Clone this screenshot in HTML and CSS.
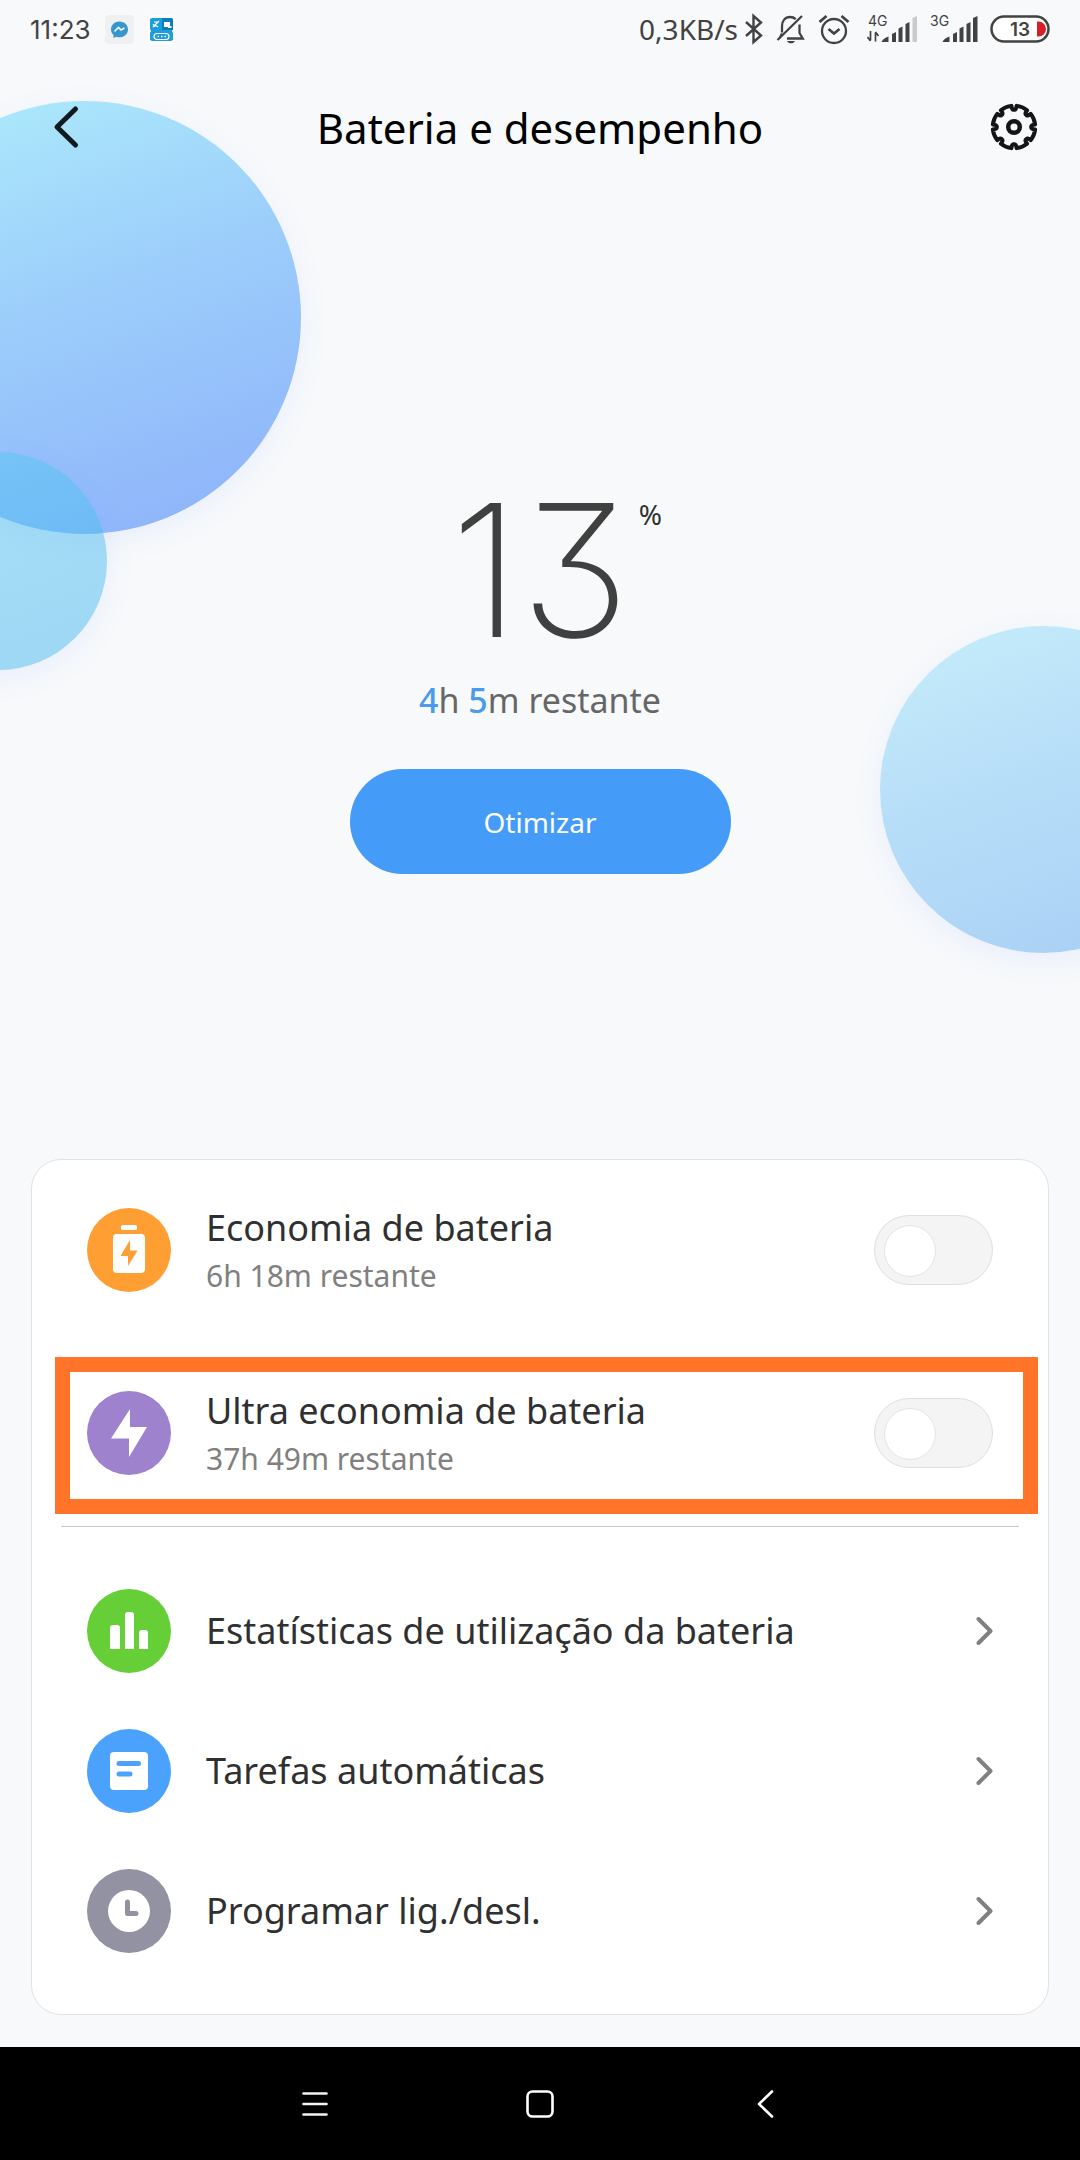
FILE: index.html
```html
<!DOCTYPE html>
<html lang="pt">
<head>
<meta charset="utf-8">
<meta name="viewport" content="width=device-width, initial-scale=1">
<title>Bateria e desempenho</title>
<link rel="stylesheet" href="styles.css">
</head>
<body>
<div class="bubbles" aria-hidden="true">
  <span class="bubble bubble-large"></span>
  <span class="bubble bubble-small"></span>
  <span class="bubble bubble-right"></span>
</div>

<div class="status">
  <div class="status-left">
    <span class="clock">11:23</span>
    <svg class="app-icon" width="29" height="29" viewBox="0 0 29 29" aria-hidden="true">
      <rect width="29" height="29" rx="4" fill="#f0f0f0"/>
      <path d="M14.5 6.500c-4.800 0-8.500 3.500-8.500 8 0 2.200.900 4 2.500 5.400v3.100l3-1.200c1 .400 2 .500 3 .500 4.800 0 8.500-3.400 8.500-7.800s-3.700-8-8.500-8z" fill="#3498cf"/>
      <path d="M9.500 16.500l4-4 2.500 2.500 3.500-2" fill="none" stroke="#fff" stroke-width="1.600"/>
    </svg>
    <svg class="app-icon" width="27" height="29" viewBox="0 0 27 29" aria-hidden="true">
      <rect width="27" height="29" rx="4" fill="#fff"/>
      <path d="M4 3h19l2 1v10l-1 2 1 2v7l-2 1H4l-2-1v-7l1-2-1-2V4z" fill="#1c9ddc"/>
      <path d="M14 3h9l2 1v11H14z" fill="#0f7cba"/>
      <path d="M5 12l6-6M6 7h3M7 10l3 2M5 9l2 3" stroke="#fff" stroke-width="1.200"/>
      <path d="M16 7h6v4h1.500v2H20v-1h-4z" fill="#fff"/>
      <rect x="6" y="18.500" width="15" height="6" rx="3" fill="#1c9ddc" stroke="#fff" stroke-width="1.200"/>
      <path d="M9.500 21.500h1.500M13 21.500h1.500M16.500 21.500h1.500" stroke="#fff" stroke-width="1.300"/>
    </svg>
  </div>
  <div class="status-right">
    <span class="speed">0,3KB/s</span>
    <svg width="20" height="32" viewBox="0 0 20 32" fill="none" stroke="#424242" stroke-width="2.400" aria-hidden="true">
      <path d="M2 9l15 13.500-7.500 6.500V3l7.500 6.500L2 23"/>
    </svg>
    <svg class="gap" width="30" height="32" viewBox="0 0 30 32" fill="none" stroke="#424242" stroke-width="2.300" aria-hidden="true">
      <path d="M6 19.500V13c0-5 3-9 8-9 2.300 0 4.300.800 5.700 2.100M23.500 11.500V20l3.300 5.500H11M1.500 27L26 3M3.500 25.500l2.500-5"/>
      <path d="M11 28h8c-.800 1.700-2.200 2.300-4 2.300S11.800 29.700 11 28z" fill="#424242" stroke="none"/>
    </svg>
    <svg class="gap" width="32" height="32" viewBox="0 0 32 32" fill="none" stroke="#424242" stroke-width="2.300" aria-hidden="true">
      <circle cx="16" cy="18" r="12"/>
      <path d="M10.500 16l5.500 4.500 5.500-4.500" stroke-width="2.600"/>
      <path d="M1.500 9l7-6M30.500 9l-7-6" stroke-width="2.800"/>
    </svg>
    <svg class="gap" width="56" height="32" viewBox="-4 0 56 32" role="img" aria-label="Sinal 4G">
      <text class="net" x="2" y="13">4G</text>
      <path d="M4.500 18v9M1.500 24l3 4M9.500 28.500v-9M12.500 23l-3-4" fill="none" stroke="#424242" stroke-width="1.700"/>
      <path d="M15.500 29c1-2.500 3.500-4.500 7-5.500V29zM26 21l4-2v10h-4zM32.500 15.500l4-2V29h-4zM39.500 11l4-2v20h-4z" fill="#424242"/>
      <path d="M46.500 5l4.500-2v26h-4.500z" fill="#cacaca"/>
    </svg>
    <svg class="gap" width="48" height="32" viewBox="0 0 48 32" role="img" aria-label="Sinal 3G">
      <text class="net" x="0" y="13">3G</text>
      <path d="M12.500 29c1-2.500 3.500-4.500 7-5.500V29zM23 21l4-2v10h-4zM29.500 15.500l4-2V29h-4zM36.500 11l4-2v20h-4zM43 5l4.500-2v26H43z" fill="#424242"/>
    </svg>
    <svg class="gap" width="60" height="32" viewBox="0 0 60 32" role="img" aria-label="Bateria 13%">
      <rect x="1.500" y="3.500" width="57" height="25" rx="12.500" fill="#fff" stroke="#424242" stroke-width="2.500"/>
      <path d="M47 8.500h1.500a7.500 7.500 0 0 1 0 15H47z" fill="#d81f26"/>
      <text class="level" x="20" y="23">13</text>
    </svg>
  </div>
</div>

<header class="bar">
  <button class="icon-button icon-button-start" type="button" aria-label="Voltar">
    <svg width="30" height="48" viewBox="0 0 30 48" fill="none" stroke="#111a1c" stroke-width="5" stroke-linecap="round" stroke-linejoin="round" aria-hidden="true"><path d="M24.500 6L6 24l18.500 18"/></svg>
  </button>
  <h1 class="title">Bateria e desempenho</h1>
  <button class="icon-button icon-button-end" type="button" aria-label="Definições">
    <svg width="48" height="48" viewBox="-24 -24 48 48" fill="none" stroke="#151515" aria-hidden="true">
      <path id="gear" stroke-width="4" stroke-linejoin="round" d=""/>
      <circle r="5.800" stroke-width="4.500"/>
    </svg>
  </button>
</header>

<main>
  <section class="hero">
    <p class="charge"><span class="charge-value">13</span><span class="charge-unit">%</span></p>
    <p class="remaining"><b>4</b>h <b>5</b>m restante</p>
    <button class="optimize" type="button">Otimizar</button>
  </section>

  <section class="card">
    <div class="modes">
      <label class="row">
        <svg class="badge" viewBox="0 0 84 84" aria-hidden="true">
          <circle cx="42" cy="42" r="42" fill="#ff9f33"/>
          <rect x="34" y="17" width="16" height="5" rx="1.500" fill="#fff"/>
          <rect x="26" y="26" width="32" height="39" rx="4" fill="#fff"/>
          <path d="M43 32v10.500h7.500L41 58V48h-7.500z" fill="#ff9f33"/>
        </svg>
        <span class="text"><span class="name">Economia de bateria</span><span class="note">6h 18m restante</span></span>
        <input class="switch" type="checkbox" role="switch">
      </label>
      <label class="row row-marked">
        <svg class="badge" viewBox="0 0 84 84" aria-hidden="true">
          <circle cx="42" cy="42" r="42" fill="#9e82ce"/>
          <path d="M43 18v18h17L42 66V47.500H24z" fill="#fff"/>
        </svg>
        <span class="text"><span class="name">Ultra economia de bateria</span><span class="note">37h 49m restante</span></span>
        <input class="switch" type="checkbox" role="switch">
      </label>
    </div>
    <hr class="divider">
    <nav class="links">
      <a class="row" href="#estatisticas">
        <svg class="badge" viewBox="0 0 84 84" aria-hidden="true">
          <circle cx="42" cy="42" r="42" fill="#66cf38"/>
          <path d="M23 60V39q0-3 3-3h4q3 0 3 3v21zM38 60V26q0-3 3-3h3q3 0 3 3v34zM52 60V44q0-3 3-3h3q3 0 3 3v16z" fill="#fff"/>
        </svg>
        <span class="text"><span class="name">Estatísticas de utilização da bateria</span></span>
        <svg class="chevron" viewBox="0 0 17 30" aria-hidden="true"><path d="M2.500 3L14.500 15l-12 12"/></svg>
      </a>
      <a class="row" href="#tarefas">
        <svg class="badge" viewBox="0 0 84 84" aria-hidden="true">
          <circle cx="42" cy="42" r="42" fill="#4ba2fd"/>
          <rect x="23" y="23" width="38" height="38" rx="4" fill="#fff"/>
          <path d="M32 34.500h19.500M32 45h11" stroke="#4ba2fd" stroke-width="5" stroke-linecap="round"/>
        </svg>
        <span class="text"><span class="name">Tarefas automáticas</span></span>
        <svg class="chevron" viewBox="0 0 17 30" aria-hidden="true"><path d="M2.500 3L14.500 15l-12 12"/></svg>
      </a>
      <a class="row" href="#programar">
        <svg class="badge" viewBox="0 0 84 84" aria-hidden="true">
          <circle cx="42" cy="42" r="42" fill="#9292a3"/>
          <circle cx="42" cy="42" r="21" fill="#fff"/>
          <path d="M40.500 33v11.500H49" fill="none" stroke="#9292a3" stroke-width="5" stroke-linecap="round" stroke-linejoin="round"/>
        </svg>
        <span class="text"><span class="name">Programar lig./desl.</span></span>
        <svg class="chevron" viewBox="0 0 17 30" aria-hidden="true"><path d="M2.500 3L14.500 15l-12 12"/></svg>
      </a>
    </nav>
  </section>
</main>

<footer class="system-nav">
  <button type="button" aria-label="Recentes">
    <svg width="32" height="32" viewBox="0 0 32 32" fill="none" stroke="#f4f4f4" stroke-width="2.600" stroke-linecap="round" aria-hidden="true"><path d="M4.500 5.500h23M4.500 16h23M4.500 26.500h23"/></svg>
  </button>
  <button type="button" aria-label="Início">
    <svg width="32" height="32" viewBox="0 0 32 32" fill="none" stroke="#fff" stroke-width="2.600" aria-hidden="true"><rect x="3.500" y="3.500" width="25" height="25" rx="5"/></svg>
  </button>
  <button type="button" aria-label="Voltar">
    <svg width="32" height="32" viewBox="0 0 32 32" fill="none" stroke="#fff" stroke-width="2.600" stroke-linecap="round" stroke-linejoin="round" aria-hidden="true"><path d="M23 3.500L10 16l13 12.500"/></svg>
  </button>
</footer>
<script src="gear.js"></script>
</body>
</html>
```
FILE: gear.js
```js
// Outline of the settings gear: eight wide teeth parted by small round notches.
const point = (radius, degrees) => {
  const a = degrees * Math.PI / 180;
  return (radius * Math.sin(a)).toFixed(2) + " " + (-radius * Math.cos(a)).toFixed(2);
};
let outline = "";
for (let i = 0; i < 8; i++) {
  const notch = i * 45;
  outline += (i ? "L" : "M") + point(21.300, notch - 7);
  outline += "Q" + point(16.800, notch - 7) + " " + point(17.300, notch);
  outline += "Q" + point(16.800, notch + 7) + " " + point(21.300, notch + 7);
  outline += "A21.300 21.300 0 0 1 " + point(21.300, notch + 38);
}
document.getElementById("gear").setAttribute("d", outline + "Z");
```
FILE: styles.css
```css
* {
  box-sizing: border-box;
}

body {
  position: relative;
  display: flex;
  flex-direction: column;
  min-height: 100vh;
  margin: 0;
  overflow-x: hidden;
  background: #f7f9fb;
  color: #303030;
  font-family: "Noto Sans", "Open Sans", sans-serif;
}

button {
  padding: 0;
  border: 0;
  background: none;
  font-family: inherit;
}

svg {
  display: block;
  flex: none;
}

/* Decorative circles behind the page */
.bubbles {
  position: absolute;
  inset: 0;
  z-index: -1;
  overflow: hidden;
}

.bubble {
  position: absolute;
  border-radius: 50%;
  box-shadow: 0 8px 28px rgba(120, 150, 255, 0.1);
}

.bubble-large {
  top: 101px;
  left: -132px;
  width: 433px;
  height: 433px;
  background: linear-gradient(160deg, #aceafb 5%, #9bcbfb 50%, #8eb3fa 95%);
}

.bubble-small {
  top: 452px;
  left: -111px;
  width: 218px;
  height: 218px;
  background: linear-gradient(160deg, rgba(86, 200, 246, 0.48), rgba(66, 180, 236, 0.5));
}

.bubble-right {
  top: 626px;
  right: -127px;
  width: 327px;
  height: 327px;
  background: linear-gradient(160deg, #c6eefa, #b7def8 45%, #a8cff5);
}

/* Status bar */
.status {
  display: flex;
  align-items: center;
  justify-content: space-between;
  height: 58px;
  padding: 0 30px;
  color: #424242;
}

.status-left,
.status-right {
  display: flex;
  align-items: center;
}

.clock {
  font-family: Inter, sans-serif;
  font-size: 26px;
}

.app-icon {
  margin-left: 14px;
}

.speed {
  margin-right: 6px;
  font-size: 28px;
}

.gap {
  margin-left: 12px;
}

.net,
.level {
  fill: #424242;
  font-family: Inter, sans-serif;
  font-size: 14px;
}

.level {
  font-size: 19px;
  font-weight: 600;
}

/* Title bar */
.bar {
  display: grid;
  grid-template-columns: 1fr auto 1fr;
  align-items: center;
  height: 138px;
  padding: 0 42px;
}

.title {
  margin: 0;
  color: #000;
  font-size: 42px;
  font-weight: 400;
}

.icon-button-start {
  justify-self: start;
  padding-left: 9px;
}

.icon-button-end {
  justify-self: end;
}

/* Battery level */
.hero {
  display: flex;
  flex-direction: column;
  align-items: center;
  padding: 278px 32px 285px;
}

.hero p {
  margin: 0;
}

.charge {
  display: grid;
  grid-template-columns: 1fr auto 1fr;
  color: #404040;
}

.charge-value {
  grid-column: 2;
  font-family: Inter, sans-serif;
  font-size: 184px;
  font-weight: 230;
  font-feature-settings: "cv09";
  line-height: 192px;
}

.charge-unit {
  padding: 20px 0 0 9px;
  color: #303030;
  font-size: 28px;
  line-height: 40px;
}

.remaining {
  color: #666;
  font-size: 34px;
  line-height: 68px;
}

.remaining b {
  color: #4b9bea;
  font-weight: 500;
}

.optimize {
  width: 381px;
  height: 105px;
  margin-top: 35px;
  border-radius: 53px;
  background: #449bf8;
  color: #fff;
  font-size: 28px;
}

/* Settings card */
.card {
  margin: 0 31px 32px;
  padding-bottom: 33px;
  border: 1px solid #e0e2e4;
  border-radius: 30px;
  background: #fff;
}

.row {
  position: relative;
  display: flex;
  align-items: center;
  height: 140px;
  padding: 0 55px;
  color: inherit;
  text-decoration: none;
}

.modes .row {
  height: 183px;
  padding-bottom: 3px;
}

/* Orange frame drawn over the highlighted mode */
.row-marked::after {
  content: "";
  position: absolute;
  inset: 14px 10px 12px 23px;
  border: 15px solid #ff7429;
  pointer-events: none;
}

.badge {
  width: 84px;
  height: 84px;
}

.text {
  display: flex;
  flex: 1;
  flex-direction: column;
  padding-left: 35px;
}

.modes .text {
  padding-top: 4px;
}

.name {
  font-size: 36px;
  line-height: 48px;
}

.note {
  color: #808080;
  font-size: 30px;
  line-height: 48px;
}

.switch {
  width: 119px;
  height: 70px;
  margin: 0;
  padding: 9px;
  border: 1px solid #dfdfdf;
  border-radius: 35px;
  background: #f4f4f4;
  appearance: none;
}

.switch::before {
  content: "";
  display: block;
  width: 50px;
  height: 50px;
  border: 1px solid #e4e4e4;
  border-radius: 50%;
  background: #fff;
}

.switch:checked {
  background: #449bf8;
}

.switch:checked::before {
  margin-left: auto;
}

.divider {
  height: 1px;
  margin: 0 29px 34px;
  border: 0;
  background: #c8c8c8;
}

.chevron {
  width: 17px;
  height: 30px;
  fill: none;
  stroke: #808080;
  stroke-width: 4;
  stroke-linecap: round;
  stroke-linejoin: round;
}

/* System navigation */
.system-nav {
  display: flex;
  justify-content: center;
  height: 113px;
  margin-top: auto;
  background: #000;
}

.system-nav button {
  display: grid;
  flex: 0 1 225px;
  place-items: center;
}
```
